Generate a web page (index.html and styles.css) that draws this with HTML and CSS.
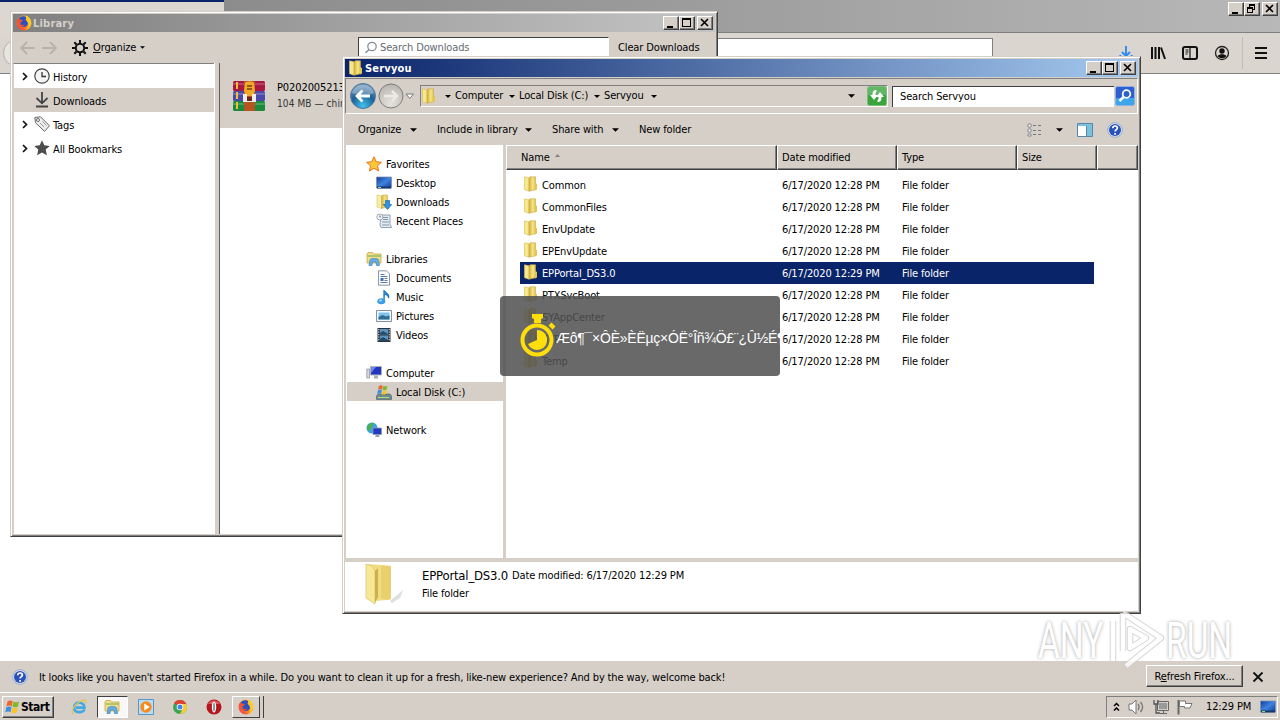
FILE: index.html
```
<!DOCTYPE html>
<html lang="en">
<head>
    <meta charset="UTF-8">
    <meta name="viewport" content="width=device-width, initial-scale=1.0">
    <title>Desktop</title>
    <link rel="stylesheet" href="styles.css">
</head>
<body>
    <!-- Icon sprites -->
    <svg class="sprites" width="0" height="0">
        <defs>
            <linearGradient id="g-gold" x1="0" x2="1"><stop offset="0" stop-color="#cfae3d"/><stop offset=".3" stop-color="#e6cb5e"/><stop offset=".6" stop-color="#f6e68c"/><stop offset="1" stop-color="#dcbf4c"/></linearGradient>
            <linearGradient id="g-blue" x1="0" x2="1" y1="0" y2="1"><stop offset="0" stop-color="#123a9a"/><stop offset=".5" stop-color="#3f83dc"/><stop offset="1" stop-color="#123a9a"/></linearGradient>
            <radialGradient id="g-back" cx=".5" cy=".9" r=".8"><stop offset="0" stop-color="#3fc3ee"/><stop offset=".6" stop-color="#1c5f96"/><stop offset="1" stop-color="#6a94b8"/></radialGradient>
            <radialGradient id="g-fwd" cx=".5" cy=".8" r=".8"><stop offset="0" stop-color="#e6e3de"/><stop offset="1" stop-color="#b9b6b1"/></radialGradient>
            <linearGradient id="g-fox" x1="1" x2="0" y1="0" y2="1"><stop offset="0" stop-color="#ffe53b"/><stop offset=".5" stop-color="#ff9416"/><stop offset="1" stop-color="#f0245a"/></linearGradient>
        </defs>
        <symbol id="folder" viewBox="0 0 16 16">
            <path d="M1.500 .8l4.500 1v13.400l-4.500-1.500z" fill="#f7e78e" stroke="#d8be5a" stroke-width=".6"/>
            <path d="M6 2.500l1-1.700h5.500v13l-6.500 1.400z" fill="url(#g-gold)" stroke="#ccab45" stroke-width=".6"/>
            <path d="M12 7l2 1v5.500L12 14.500z" fill="#e3c553"/>
        </symbol>
        <symbol id="firefox" viewBox="0 0 16 16">
            <circle cx="8" cy="8" r="7.500" fill="url(#g-fox)"/>
            <path d="M3 3.500C4.500 1 8.500.5 10.500 2.500l-1 2 2.500 3.500c0 2.500-2 4-4.300 4C5 12 4 10 4.500 8z" fill="#2b4fc4"/>
            <path d="M.8 5.500L2.500 3l1.200 1.600 3 .3-.6 1.600-2 .9C4 9.500 6 10.800 8.800 9.600 8.500 12 3.500 12.500 2 9z" fill="#f3532b"/>
            <path d="M10 .8c3.500 1.200 5.500 4.500 5 8-.4 3.500-3 5.800-5 6.200 3-2.500 3.500-7 .5-10z" fill="#ffcb25"/>
        </symbol>
        <symbol id="help" viewBox="0 0 16 16">
            <circle cx="8" cy="8" r="7.300" fill="#dbe5f5" stroke="#8aa0c4" stroke-width=".8"/>
            <circle cx="8" cy="8" r="6" fill="#2a50ba"/>
            <path d="M5.800 6.200c0-3 4.600-2.800 4.600-.3 0 1.600-2.300 1.800-2.300 3.600M8.100 11v1.700" fill="none" stroke="#fff" stroke-width="1.700"/>
        </symbol>
        <symbol id="library" viewBox="0 0 16 16">
            <path d="M1 3l1-1.500h4.500l1 1.500H15v9H1z" fill="#f2df83" stroke="#c9a73c" stroke-width=".8"/>
            <path d="M1.500 5H15" stroke="#7fb56d" stroke-width="1.200"/>
            <path d="M4 9c0-2 8.500-2 8.500 0l1 5.500h-3L10 11H6.500L6 14.500H3z" fill="#63aee6" stroke="#3d82c2" stroke-width=".7"/>
        </symbol>
        <symbol id="star" viewBox="0 0 16 16">
            <path d="M8 .8l2.200 4.900 5.200.6-3.900 3.500 1.100 5.200L8 12.300 3.400 15l1.100-5.200L.6 6.300l5.200-.6z" fill="#ffc63c" stroke="#e0741a" stroke-width="1"/>
        </symbol>
        <symbol id="screen" viewBox="0 0 16 16">
            <path d="M.5 2h15v11H.5z" fill="url(#g-blue)" stroke="#7b92b4" stroke-width=".8"/>
            <path d="M1 11.500h14v2H1z" fill="#17386f"/><path d="M2 12.500h3" stroke="#9fd16b"/>
        </symbol>
        <symbol id="downloads" viewBox="0 0 16 16">
            <path d="M1 1l4.500 1v12.500L1 13z" fill="#f8eda4" stroke="#d8c36a" stroke-width=".6"/>
            <path d="M5.500 2l1-1h5v12l-6 1.500z" fill="url(#g-gold)" stroke="#ccb150" stroke-width=".6"/>
            <path d="M9.500 6.500h4v4h2.200L11.500 15.500 7.300 10.500h2.200z" fill="#2f93dd" stroke="#1d63a8" stroke-width=".7"/>
        </symbol>
        <symbol id="recent" viewBox="0 0 16 16">
            <path d="M5 2h9v9l1.500 3.500H5L4 12z" fill="#e4ebf1" stroke="#8798a8" stroke-width=".9"/>
            <path d="M7 4.500h5M7 6.500h5M6 9h7M6 12h7" stroke="#8296aa"/>
            <circle cx="3.800" cy="4" r="3" fill="#f3f6f8" stroke="#93a3b2" stroke-width=".9"/><path d="M3.800 2.500V4H5" fill="none" stroke="#56697c" stroke-width=".8"/>
        </symbol>
        <symbol id="document" viewBox="0 0 16 16">
            <path d="M2.500.8h8l3 3v11.400h-11z" fill="#fdfdfd" stroke="#7a8da3" stroke-width=".9"/>
            <path d="M4.500 4.500h4M4.500 6.500h7M4.500 12.500h7M8.500 8.500h3M8.500 10.500h3" stroke="#5c7b9e"/><path d="M4.500 8h3v3h-3z" fill="#3c6fb5"/>
        </symbol>
        <symbol id="music" viewBox="0 0 16 16">
            <path d="M8 12V1c.5 3 6 3.500 4.500 8 0-2.500-2-3.500-3.500-3.700" fill="#3f9fe6" stroke="#2277c5" stroke-width="1.300"/>
            <ellipse cx="5.300" cy="12.300" rx="4" ry="3" fill="#3b9be4"/><ellipse cx="4.500" cy="11.500" rx="1.500" ry=".9" fill="#b6defa"/>
        </symbol>
        <symbol id="picture" viewBox="0 0 16 16">
            <path d="M.5 2.500h15v11H.5z" fill="#f8fafb" stroke="#7f93a6"/><path d="M2.500 4.500h11v7h-11z" fill="#7ec4ea"/>
            <path d="M2.500 9l4-2 3.500 1.500 3.500-1v4h-11z" fill="#2f6c8e"/>
        </symbol>
        <symbol id="video" viewBox="0 0 16 16">
            <path d="M1.500 1h13v14h-13z" fill="#27323e"/><path d="M4 2h8v5.500H4zM4 8.500h8V14H4z" fill="#5c95bf"/>
            <path d="M2.800 2v12M13.200 2v12" stroke="#f2f2f2" stroke-dasharray="1.300 1.200"/><path d="M4 6l3-2 5 3v.5H4zM4 12l3-2 5 3v1H4z" fill="#234b66"/>
        </symbol>
        <symbol id="computer" viewBox="0 0 16 16">
            <path d="M.8 4h2.700v9H.8z" fill="#d7dbe0" stroke="#8b939d" stroke-width=".8"/>
            <path d="M4.500 1.500h11v8.500h-11z" fill="#2436c0" stroke="#aab2bf"/><path d="M5 2h5L5 8z" fill="#6f86e8"/><path d="M8.500 10.500h3l1 3h-5z" fill="#a5adb8"/>
        </symbol>
        <symbol id="flag-win" viewBox="0 0 16 16">
            <path d="M2.500 2.500C4.500 1.200 6 1.300 7.700 2.200L6.700 7.200C5 6.300 3.500 6.300 1.500 7.400z" fill="#f0642d"/>
            <path d="M8.500 2.600c1.800.9 3.500.9 5.500-.2l-1 5c-2 1.100-3.800 1.100-5.500.2z" fill="#7fb92e"/>
            <path d="M1.300 8.300C3.300 7.200 5 7.200 6.500 8.100l-1 5C4 12.200 2.300 12.200.3 13.300z" fill="#3f8fe0"/>
            <path d="M7.300 8.500c1.800.9 3.500.9 5.500-.2l-1 5c-2 1.100-3.800 1.100-5.500.2z" fill="#fbc526"/>
        </symbol>
        <symbol id="disk" viewBox="0 0 16 16">
            <path d="M2 10h12l1.500 2v3.500H.5V12z" fill="#71888f" stroke="#51686f" stroke-width=".7"/><path d="M2 13.500h11" stroke="#a9e27a"/>
            <svg x="1" y="0" width="12" height="12"><use href="#flag-win"/></svg>
        </symbol>
        <symbol id="network" viewBox="0 0 16 16">
            <circle cx="6" cy="6" r="5.500" fill="#3fa3d8"/><path d="M2 3.500C4 .5 7 .5 8 1c0 2-3 2-2.500 4S3 8 2 9C.5 7 .8 5 2 3.500z" fill="#4db04b"/>
            <path d="M7 6h8.500v6.500H7z" fill="#2339c4" stroke="#8d98b0" stroke-width=".8"/><path d="M10 13h3l.7 2H9z" fill="#98a1b0"/>
        </symbol>
        <symbol id="ie" viewBox="0 0 16 16">
            <path d="M13.500 10.500C12 13.800 3.200 15 3.200 8.500c0-6.500 10.300-6.300 10.300.2H5" fill="none" stroke="#41a9e4" stroke-width="2.700"/>
            <path d="M2 15C-1 12 5 3 12 1.300c3-.6 3.500 1 2.500 3" fill="none" stroke="#e5c443" stroke-width="1.200"/>
        </symbol>
        <symbol id="wmp" viewBox="0 0 16 16">
            <path d="M.5.5h15v15H.5z" fill="#b9dcf4" stroke="#5796c8"/><circle cx="8" cy="8" r="5.700" fill="#f68a1c"/><path d="M6.200 4.500v7l5.500-3.500z" fill="#fff"/>
        </symbol>
        <symbol id="chrome" viewBox="0 0 16 16">
            <circle cx="8" cy="8" r="7" fill="#38a456"/><path d="M8 8L2 4.300A7 7 0 0 1 14.200 5H8z" fill="#e2402f"/><path d="M8 8V5h6.300A7 7 0 0 1 8 15l2.500-5z" fill="#fbcd30"/>
            <circle cx="8" cy="8" r="3.300" fill="#fff"/><circle cx="8" cy="8" r="2.500" fill="#4284ee"/>
        </symbol>
        <symbol id="opera" viewBox="0 0 16 16">
            <circle cx="8" cy="8" r="7.500" fill="#b5161b"/><path d="M2 5a7 7 0 0 1 12 0z" fill="#dd5a58"/><ellipse cx="8" cy="8" rx="2.200" ry="5.500" fill="#fff"/><ellipse cx="8" cy="8" rx="1" ry="4.500" fill="#8d9295"/>
        </symbol>
        <symbol id="min" viewBox="0 0 14 12"><path d="M3 9h6v2H3z"/></symbol>
        <symbol id="max" viewBox="0 0 14 12"><path d="M2 1h9v9H2zM3 3v6h7V3z" fill-rule="evenodd"/></symbol>
        <symbol id="restore" viewBox="0 0 14 12"><path d="M4 1h6v6H8V6h1V3H5v1H4zM2 4h6v6H2zM3 6v3h4V6z" fill-rule="evenodd"/></symbol>
        <symbol id="close" viewBox="0 0 14 12"><path d="M3 2l7 7M10 2L3 9" fill="none" stroke="#000" stroke-width="1.600"/></symbol>
        <symbol id="down" viewBox="0 0 8 4"><path d="M0 0h8L4 4z"/></symbol>
        <symbol id="chevron" viewBox="0 0 6 9"><path d="M1 1l3.500 3.500L1 8" fill="none" stroke="#111" stroke-width="1.700"/></symbol>
    </svg>

    <!-- Firefox browser behind everything -->
    <div class="browser">
        <div class="tab-strip">
            <div class="browser-tab"></div>
            <div class="caption-buttons">
                <span class="caption"><svg><use href="#min"/></svg></span>
                <span class="caption"><svg><use href="#restore"/></svg></span>
                <span class="caption spaced"><svg><use href="#close"/></svg></span>
            </div>
        </div>
        <div class="nav-bar">
            <div class="back-circle"></div>
            <div class="url-bar"></div>
            <div class="nav-icons">
                <svg width="14" height="16" viewBox="0 0 14 16"><path d="M7 1v10M3 7l4 4 4-4" fill="none" stroke="#2f8cf0" stroke-width="2"/><path d="M1 10c1 4 11 4 12 0" fill="none" stroke="#2f8cf0" stroke-width="2"/></svg>
                <svg width="16" height="16" viewBox="0 0 16 16"><path d="M2 2v12M5.500 2v12M9 2v12M11 2.500l4 11.500" fill="none" stroke="#111" stroke-width="2"/></svg>
                <svg width="16" height="16" viewBox="0 0 16 16"><rect x="1" y="2" width="14" height="12" rx="2" fill="none" stroke="#111" stroke-width="2"/><path d="M8 2v12M3.500 5h3M3.500 7h3M3.500 9h2" stroke="#111" stroke-width="1.200"/></svg>
                <svg width="16" height="16" viewBox="0 0 16 16"><circle cx="8" cy="8" r="6.500" fill="none" stroke="#222" stroke-width="1.300"/><circle cx="8" cy="6" r="2.700" fill="#111"/><path d="M3.500 11c2-2.500 7-2.500 9 0-2 3-7 3-9 0z" fill="#111"/></svg>
                <span class="nav-divider"></span>
                <svg width="14" height="14" viewBox="0 0 14 14"><path d="M1 2h12M1 7h12M1 12h12" stroke="#111" stroke-width="2"/></svg>
            </div>
        </div>
        <div class="page"></div>
        <div class="notification">
            <svg class="icon16"><use href="#help"/></svg>
            <span class="notification-text">It looks like you haven't started Firefox in a while. Do you want to clean it up for a fresh, like-new experience? And by the way, welcome back!</span>
            <span class="refresh-button">R<u>e</u>fresh Firefox...</span>
            <svg class="dismiss" viewBox="0 0 12 12"><path d="M1.500 1.500l9 9M10.500 1.500l-9 9" stroke="#111" stroke-width="1.800"/></svg>
        </div>
    </div>

    <!-- Downloads library window -->
    <div class="window library-window">
        <div class="title-bar inactive">
            <svg class="icon16"><use href="#firefox"/></svg>
            <span class="window-title">Library</span>
            <div class="caption-buttons">
                <span class="caption"><svg><use href="#min"/></svg></span>
                <span class="caption"><svg><use href="#max"/></svg></span>
                <span class="caption spaced"><svg><use href="#close"/></svg></span>
            </div>
        </div>
        <div class="library-toolbar">
            <svg class="arrows" viewBox="0 0 40 16"><path d="M16 8H2M8 2L2 8l6 6M23 8h14M31 2l6 6-6 6" fill="none" stroke="#b7b2aa" stroke-width="1.800"/></svg>
            <svg class="icon16 gear" viewBox="0 0 16 16"><circle cx="8" cy="8" r="4.200" fill="none" stroke="#111" stroke-width="2"/><path d="M8 0v3M8 13v3M0 8h3M13 8h3M2.300 2.300l2.200 2.200M11.500 11.500l2.200 2.200M2.300 13.700l2.200-2.200M11.500 4.500l2.200-2.200" stroke="#111" stroke-width="2"/></svg>
            <span class="library-organize"><u>O</u>rganize</span>
            <svg class="tiny-arrow"><use href="#down"/></svg>
            <div class="library-search">
                <svg width="14" height="14" viewBox="0 0 14 14"><circle cx="8" cy="5.500" r="4.200" fill="none" stroke="#888d99" stroke-width="1.300"/><path d="M5 8.500L1.500 12" stroke="#888d99" stroke-width="1.500"/></svg>
                <span>Search Downloads</span>
            </div>
            <span class="clear-downloads">Clear Downloads</span>
        </div>
        <div class="library-body">
            <div class="library-tree">
                <div class="tree-item">
                    <svg class="twisty"><use href="#chevron"/></svg>
                    <svg class="icon16" viewBox="0 0 16 16"><circle cx="8" cy="8" r="7.200" fill="#f4f4f4" stroke="#444" stroke-width="1.200"/><path d="M8 4v4.500h4" fill="none" stroke="#333" stroke-width="1.300"/></svg>
                    <span class="tree-label">History</span>
                </div>
                <div class="tree-item selected">
                    <span class="twisty"></span>
                    <svg class="icon16" viewBox="0 0 16 16"><path d="M8 0v11M2.500 6L8 11.300 13.500 6M2 14.500h12" fill="none" stroke="#444" stroke-width="1.800"/></svg>
                    <span class="tree-label">Downloads</span>
                </div>
                <div class="tree-item">
                    <svg class="twisty"><use href="#chevron"/></svg>
                    <svg class="icon16" viewBox="0 0 16 16"><path d="M.8 1.500L6.500.8l9 9-5 5.500-9-8.500z" fill="#eee" stroke="#666"/><circle cx="4" cy="4" r="1.500" fill="#fff" stroke="#666"/><path d="M6 7l4 4M8.500 5.500l4 4" stroke="#999"/></svg>
                    <span class="tree-label">Tags</span>
                </div>
                <div class="tree-item">
                    <svg class="twisty"><use href="#chevron"/></svg>
                    <svg class="icon16" viewBox="0 0 16 16"><path d="M8 .3l2.300 5 5.500.6-4.100 3.700 1.200 5.600L8 12.400l-4.900 2.800 1.200-5.600L.2 5.900l5.500-.6z" fill="#4c4c4c"/></svg>
                    <span class="tree-label">All Bookmarks</span>
                </div>
            </div>
            <div class="library-splitter"></div>
            <div class="library-list">
                <div class="download-item">
                    <svg width="32" height="32" viewBox="0 0 32 32">
                        <rect y="1" width="32" height="10" rx="1.500" fill="#a81840"/><rect y="11" width="32" height="10" rx="1.500" fill="#4a4aa8"/><rect y="21" width="32" height="10" rx="1.500" fill="#1c8a3c"/>
                        <path d="M0 4h32M0 14h32M0 24h32" stroke="#fff" stroke-opacity=".25" stroke-width="1.500"/>
                        <path d="M4 2v7M4 12v7M4 22v7" stroke="#f0bf35" stroke-width="2"/>
                        <path d="M11 1h11v30H11z" fill="#b5541f"/><path d="M12 3c1-2 8-2 9 0l1 8-2 5h-7l-2-5z" fill="#f0a92b"/><path d="M14 6h5M14 9h5" stroke="#7a3d10" stroke-width="1.500"/>
                        <path d="M10 14h4v3h5v-3h4v8H10z" fill="#eee"/><path d="M14 17h5v4h-5z" fill="#70221d"/>
                    </svg>
                    <div class="download-info">
                        <div class="download-name">P0202005213</div>
                        <div class="download-meta">104 MB — chin</div>
                    </div>
                </div>
            </div>
        </div>
    </div>

    <!-- Explorer window -->
    <div class="window explorer-window">
        <div class="title-bar active">
            <svg class="icon16"><use href="#folder"/></svg>
            <span class="window-title">Servyou</span>
            <div class="caption-buttons">
                <span class="caption"><svg><use href="#min"/></svg></span>
                <span class="caption"><svg><use href="#max"/></svg></span>
                <span class="caption spaced"><svg><use href="#close"/></svg></span>
            </div>
        </div>
        <div class="address-row">
            <svg class="travel" width="68" height="28" viewBox="0 0 68 28">
                <circle cx="15" cy="14" r="12.500" fill="url(#g-back)" stroke="#56789a"/><path d="M4 11a11.500 11.500 0 0 1 22 0c-7 3-15 3-22 0z" fill="#fff" fill-opacity=".3"/>
                <path d="M22 14H9M14.500 8.500L9 14l5.500 5.500" fill="none" stroke="#fff" stroke-width="2.800"/>
                <circle cx="43" cy="14" r="12" fill="url(#g-fwd)" stroke="#7d7d7d"/><path d="M36 14h13M44 9l5 5-5 5" fill="none" stroke="#eceae6" stroke-width="2.500"/>
                <path d="M58 12h7.500l-3.700 4.500z" fill="#fff" stroke="#777"/>
            </svg>
            <div class="address-bar">
                <svg class="icon16"><use href="#folder"/></svg>
                <svg class="crumb-arrow first"><use href="#down"/></svg>
                <span class="crumb crumb-computer">Computer</span>
                <svg class="crumb-arrow"><use href="#down"/></svg>
                <span class="crumb crumb-disk">Local Disk (C:)</span>
                <svg class="crumb-arrow"><use href="#down"/></svg>
                <span class="crumb crumb-folder">Servyou</span>
                <svg class="crumb-arrow"><use href="#down"/></svg>
                <svg class="address-drop"><use href="#down"/></svg>
                <svg class="go" width="20" height="20" viewBox="0 0 20 20"><rect x=".5" y=".5" width="19" height="19" rx="2" fill="#3aa53d" stroke="#7fbd7a"/><path d="M1 1h18v8H1z" fill="#fff" fill-opacity=".2"/><path d="M9.500 4C6 4 5.500 6 5.500 9H3l4 5 4-5H8.500c0-2 0-2.500 1-3zM10.500 16c3.500 0 4-2 4-5H17l-4-5-4 5h2.500c0 2 0 2.500-1 3z" fill="#fff"/></svg>
            </div>
            <div class="search-box">Search Servyou</div>
            <svg class="search-go" width="20" height="20" viewBox="0 0 20 20"><rect x=".5" y=".5" width="19" height="19" rx="2" fill="#2c5fd0" stroke="#8fb1e8"/><path d="M1 12h18v7H1z" fill="#45c4f2" fill-opacity=".7"/><circle cx="11.500" cy="8" r="3.800" fill="none" stroke="#fff" stroke-width="1.800"/><path d="M8.500 11L4.500 15" stroke="#fff" stroke-width="2.500"/></svg>
        </div>
        <div class="command-bar">
            <span class="command cmd-organize">Organize <svg><use href="#down"/></svg></span>
            <span class="command cmd-include">Include in library <svg><use href="#down"/></svg></span>
            <span class="command cmd-share">Share with <svg><use href="#down"/></svg></span>
            <span class="command">New folder</span>
            <div class="view-tools">
                <svg width="16" height="14" viewBox="0 0 16 14"><path d="M2 1h3v3H2zM2 6h3v3H2zM2 11h3v2H2z" fill="#fff" stroke="#868a91"/><path d="M7 2.500h3M12 2.500h3M7 7.500h3M12 7.500h3M7 11.500h3M12 11.500h3" stroke="#777"/></svg>
                <svg class="view-arrow"><use href="#down"/></svg>
                <svg width="16" height="14" viewBox="0 0 16 14"><path d="M.5.5h15v13H.5z" fill="#fff" stroke="#5887a8"/><path d="M1 1h14v2H1zM10 3h5v10h-5z" fill="#7cc0e0"/><path d="M9.500 3v10" stroke="#5887a8"/></svg>
                <svg class="icon16"><use href="#help"/></svg>
            </div>
        </div>
        <div class="explorer-body">
            <div class="nav-pane">
                <div class="nav-item root"><svg class="icon16"><use href="#star"/></svg><span>Favorites</span></div>
                <div class="nav-item"><svg class="icon16"><use href="#screen"/></svg><span>Desktop</span></div>
                <div class="nav-item"><svg class="icon16"><use href="#downloads"/></svg><span>Downloads</span></div>
                <div class="nav-item"><svg class="icon16"><use href="#recent"/></svg><span>Recent Places</span></div>
                <div class="nav-item root group"><svg class="icon16"><use href="#library"/></svg><span>Libraries</span></div>
                <div class="nav-item"><svg class="icon16"><use href="#document"/></svg><span>Documents</span></div>
                <div class="nav-item"><svg class="icon16"><use href="#music"/></svg><span>Music</span></div>
                <div class="nav-item"><svg class="icon16"><use href="#picture"/></svg><span>Pictures</span></div>
                <div class="nav-item"><svg class="icon16"><use href="#video"/></svg><span>Videos</span></div>
                <div class="nav-item root group"><svg class="icon16"><use href="#computer"/></svg><span>Computer</span></div>
                <div class="nav-item selected"><svg class="icon16"><use href="#disk"/></svg><span>Local Disk (C:)</span></div>
                <div class="nav-item root group"><svg class="icon16"><use href="#network"/></svg><span>Network</span></div>
            </div>
            <div class="file-pane">
                <div class="columns file-header">
                    <span class="name-header">Name <svg width="5" height="3" viewBox="0 0 5 3"><path d="M0 3h5L2.500 0z" fill="#808080"/></svg></span>
                    <span>Date modified</span><span>Type</span><span>Size</span><span></span>
                </div>
                <div class="file-list">
                    <div class="columns file-row"><span class="file-name"><svg class="icon16"><use href="#folder"/></svg>Common</span><span>6/17/2020 12:28 PM</span><span>File folder</span></div>
                    <div class="columns file-row"><span class="file-name"><svg class="icon16"><use href="#folder"/></svg>CommonFiles</span><span>6/17/2020 12:28 PM</span><span>File folder</span></div>
                    <div class="columns file-row"><span class="file-name"><svg class="icon16"><use href="#folder"/></svg>EnvUpdate</span><span>6/17/2020 12:28 PM</span><span>File folder</span></div>
                    <div class="columns file-row"><span class="file-name"><svg class="icon16"><use href="#folder"/></svg>EPEnvUpdate</span><span>6/17/2020 12:28 PM</span><span>File folder</span></div>
                    <div class="columns file-row selected"><span class="file-name"><svg class="icon16"><use href="#folder"/></svg>EPPortal_DS3.0</span><span>6/17/2020 12:29 PM</span><span>File folder</span></div>
                    <div class="columns file-row"><span class="file-name"><svg class="icon16"><use href="#folder"/></svg>PTXSvcBoot</span><span>6/17/2020 12:28 PM</span><span>File folder</span></div>
                    <div class="columns file-row"><span class="file-name"><svg class="icon16"><use href="#folder"/></svg>SYAppCenter</span><span>6/17/2020 12:28 PM</span><span>File folder</span></div>
                    <div class="columns file-row"><span class="file-name"><svg class="icon16"><use href="#folder"/></svg>SYPF</span><span>6/17/2020 12:28 PM</span><span>File folder</span></div>
                    <div class="columns file-row"><span class="file-name"><svg class="icon16"><use href="#folder"/></svg>Temp</span><span>6/17/2020 12:28 PM</span><span>File folder</span></div>
                </div>
            </div>
        </div>
        <div class="details-pane">
            <svg class="big-folder" width="44" height="44" viewBox="0 0 44 44">
                <path d="M27 38l13-11-3 8-8 5z" fill="#c9c9cc" opacity=".6"/>
                <path d="M3 1l17 1 8 1v33l-4 1-12 1z" fill="#efdd86"/><path d="M18 3h10v33l-4 1-6-2z" fill="#e9d06c"/>
                <path d="M3 1l6 2 3 5v33L3 35z" fill="#f8e795" stroke="#dcc263" stroke-width=".7"/><path d="M12 8l3-3v29l-3 6z" fill="#cdb04b"/>
            </svg>
            <div>
                <div class="details-line"><span class="details-name">EPPortal_DS3.0</span><span class="details-date">Date modified: 6/17/2020 12:29 PM</span></div>
                <div class="details-line">File folder</div>
            </div>
        </div>
    </div>

    <!-- Launch splash -->
    <div class="splash">
        <svg width="36" height="44" viewBox="0 0 36 44">
            <circle cx="17" cy="27" r="14.500" fill="none" stroke="#ffdf0a" stroke-width="4"/>
            <path d="M12 1h11v4l-2 1v4h-7V6l-2-1z" fill="#ffdf0a"/><path d="M28.500 12.500l3-3 4 4-3 3z" fill="#ffdf0a"/>
            <path d="M17 17a10 10 0 1 1-9 14l9-4z" fill="#ffdf0a"/>
        </svg>
        <span>Æô¶¯×ÔÈ»ÈËµç×ÓË°Îñ¾Ö£¨¿Û½É¶</span>
    </div>

    <!-- Taskbar -->
    <div class="taskbar">
        <div class="start-button"><svg class="icon16"><use href="#flag-win"/></svg>Start</div>
        <div class="task"><svg class="icon16"><use href="#ie"/></svg></div>
        <div class="task pressed"><svg class="icon16"><use href="#library"/></svg></div>
        <div class="task"><svg class="icon16"><use href="#wmp"/></svg></div>
        <div class="task"><svg class="icon16"><use href="#chrome"/></svg></div>
        <div class="task"><svg class="icon16"><use href="#opera"/></svg></div>
        <div class="task raised"><svg class="icon16"><use href="#firefox"/></svg></div>
        <div class="task-stack"></div>
        <div class="tray">
            <svg width="7" height="10" viewBox="0 0 7 10"><path d="M1 4l2.500-2.500L6 4M1 8.500L3.500 6 6 8.500" fill="none" stroke="#000" stroke-width="1.500"/></svg>
            <svg width="17" height="16" viewBox="0 0 17 16"><path d="M1 5h3l4-4v14l-4-4H1z" fill="#fff" stroke="#777"/><path d="M10 5c1.500 2 1.500 4 0 6M12.500 3c2.500 3 2.500 7 0 10" fill="none" stroke="#777" stroke-width="1.300"/></svg>
            <svg width="16" height="16" viewBox="0 0 16 16"><path d="M5 3h10v8H5z" fill="#999" stroke="#fff"/><path d="M4.500 2.500h11v9h-11zM7 14.500h7M10.500 12v2" fill="none" stroke="#666"/><path d="M1 1v4h4V1M3 5v9h4" fill="none" stroke="#555" stroke-width="1.300"/></svg>
            <svg width="16" height="16" viewBox="0 0 16 16"><path d="M1.500 1v14.500" stroke="#666" stroke-width="2"/><path d="M2.500 2h6v2.500h6.500l-2 4.500H7.500V7.500h-5z" fill="#fff" stroke="#777"/></svg>
            <span class="clock">12:29 PM</span>
            <svg class="icon16"><use href="#screen"/></svg>
        </div>
    </div>

    <!-- Watermark -->
    <div class="watermark">
        <span class="watermark-word">ANY</span>
        <svg width="60" height="64" viewBox="0 0 60 64"><path d="M17 4v38M7 12v40M17 4l38 25L20 57M24 20l16 9-16 10z" fill="none" stroke="#ccc" stroke-width="6.500" stroke-linejoin="round"/><path d="M17 4v38M7 12v40M17 4l38 25L20 57M24 20l16 9-16 10z" fill="none" stroke="#fff" stroke-width="4.500" stroke-linejoin="round"/></svg>
        <span class="watermark-word">RUN</span>
    </div>
</body>
</html>
```
FILE: styles.css
```
* {
    box-sizing: border-box;
}

body {
    margin: 0;
    width: 1280px;
    height: 720px;
    overflow: hidden;
    position: relative;
    background: #d5cfc8;
    font-family: "DejaVu Sans Condensed", "DejaVu Sans", sans-serif;
    font-stretch: condensed;
    font-size: 11px;
    letter-spacing: -0.13px;
    line-height: 14px;
    color: #000;
    white-space: nowrap;
}

svg {
    flex-shrink: 0;
    display: block;
}

.sprites {
    position: absolute;
}

.icon16 {
    width: 16px;
    height: 16px;
}

/* Caption buttons */
.caption-buttons {
    display: flex;
    margin-left: auto;
}

.caption {
    width: 16px;
    height: 14px;
    background: #d5cfc8;
    border: 1px solid;
    border-color: #fff #404040 #404040 #fff;
    box-shadow: inset -1px -1px #808080;
}

.caption svg {
    width: 14px;
    height: 12px;
}

.caption.spaced {
    margin-left: 2px;
}

/* Browser */
.browser {
    height: 692px;
    display: flex;
    flex-direction: column;
}

.tab-strip {
    display: flex;
    height: 33px;
    padding: 2px 2px 0 0;
    background: linear-gradient(90deg, #858585, #9a9a9a 50%, #b8b8b8);
    border-bottom: 1px solid #808080;
}

.browser-tab {
    width: 224px;
    height: 33px;
    margin-top: -2px;
    background: #dcd8d1;
    border-top: 2px solid #0a246a;
}

.nav-bar {
    display: flex;
    align-items: center;
    height: 41px;
    background: #dad6cf;
    border-bottom: 1px solid #808080;
}

.back-circle {
    width: 28px;
    height: 28px;
    margin-left: 3px;
    border: 1px solid #b5b1aa;
    border-radius: 50%;
    background: #e8e5df;
}

.url-bar {
    width: 860px;
    height: 28px;
    margin-left: 102px;
    margin-top: -3px;
    background: #fff;
    border: 1px solid #808080;
}

.nav-icons {
    display: flex;
    align-items: center;
    margin-left: auto;
    padding-right: 12px;
    gap: 16px;
}

.nav-icons svg:first-child {
    margin-right: 1px;
}

.nav-divider {
    width: 1px;
    height: 32px;
    margin-left: -4px;
    margin-right: -5px;
    background: #c2beb7;
}

.page {
    flex: 1;
    background: #fff;
}

.notification {
    display: flex;
    align-items: center;
    height: 31px;
    padding: 0 16px 0 12px;
    background: #d5cfc8;
}

.notification-text {
    margin-left: 11px;
    padding-top: 2px;
}

.refresh-button {
    width: 97px;
    height: 22px;
    margin-left: auto;
    margin-top: -2px;
    line-height: 22px;
    text-align: center;
    border: 1px solid;
    border-color: #fff #404040 #404040 #fff;
    box-shadow: inset -1px -1px #808080;
}

.dismiss {
    width: 12px;
    height: 12px;
    margin-left: 9px;
}

/* Windows */
.window {
    position: absolute;
    display: flex;
    flex-direction: column;
    padding: 2px;
    background: #d5cfc8;
    border: 1px solid;
    border-color: #d5cfc8 #404040 #404040 #d5cfc8;
    box-shadow: inset 1px 1px #fff, inset -1px -1px #808080;
}

.title-bar {
    display: flex;
    align-items: center;
    height: 18px;
    padding: 0 2px 0 3px;
    font-weight: bold;
    letter-spacing: 0.2px;
    flex-shrink: 0;
}

.title-bar.inactive {
    background: linear-gradient(90deg, #808080, #c4c4c4);
    color: #d5cfc8;
}

.title-bar.active {
    background: linear-gradient(90deg, #0a246a, #a6caf0);
    color: #fff;
}

.window-title {
    margin-left: 1px;
    padding-top: 1px;
}

/* Library window */
.library-window {
    left: 10px;
    top: 11px;
    width: 708px;
    height: 526px;
}

.library-toolbar {
    display: flex;
    align-items: center;
    height: 31px;
    flex-shrink: 0;
}

.arrows {
    width: 40px;
    height: 16px;
    margin-left: 6px;
}

.gear {
    margin-left: 13px;
}

.library-organize {
    width: 44px;
    margin-left: 5px;
}

.tiny-arrow {
    width: 5px;
    height: 3px;
    margin-left: 3px;
}

.library-search {
    display: flex;
    align-items: center;
    gap: 2px;
    width: 251px;
    height: 22px;
    margin-left: 213px;
    padding-left: 5px;
    background: #fff;
    border: 1px solid #fff;
    border-top-color: #404040;
    border-left-color: #404040;
    color: #666a75;
}

.clear-downloads {
    margin-left: 9px;
}

.library-body {
    display: flex;
    flex: 1;
    min-height: 0;
}

.library-tree {
    width: 201px;
    background: #fff;
    border-top: 1px solid #808080;
    border-left: 1px solid #d5cfc8;
}

.tree-item {
    display: flex;
    align-items: center;
    height: 24px;
    padding-left: 8px;
}

.tree-item .icon16 {
    margin: 0 3px 0 6px;
}

.tree-item.selected {
    background: #d5cfc8;
}

.tree-label {
    padding-top: 3px;
}

.twisty {
    width: 6px;
    height: 9px;
}

.library-splitter {
    width: 5px;
    border-left: 1px solid #fff;
}

.library-list {
    flex: 1;
    background: #fff;
    border-left: 1px solid #606060;
}

.download-item {
    display: flex;
    align-items: center;
    height: 65px;
    padding-left: 13px;
    background: #d5cfc8;
}

.download-info {
    margin-left: 12px;
}

.download-name {
    margin-top: 1px;
    letter-spacing: -0.1px;
}

.download-meta {
    margin-top: 2px;
    font-size: 10px;
    letter-spacing: 0.1px;
    color: #333;
}

/* Explorer window */
.explorer-window {
    left: 342px;
    top: 56px;
    width: 799px;
    height: 558px;
}

.address-row {
    display: flex;
    align-items: center;
    height: 36px;
    margin-top: 1px;
    flex-shrink: 0;
    border: 1px solid #808080;
    border-right-color: #fff;
    border-bottom-color: #fff;
}

.travel {
    margin-left: 2px;
}

.address-bar {
    display: flex;
    align-items: center;
    width: 468px;
    height: 22px;
    margin-left: 4px;
    border: 1px solid;
    border-color: #808080 #fff #fff #808080;
}

.crumb-arrow {
    width: 6px;
    height: 3px;
    margin: 0 4px 0 6px;
}

.crumb-arrow.first {
    margin-left: 8px;
}

.crumb-computer {
    width: 48px;
}

.crumb-disk {
    width: 69px;
}

.crumb-folder {
    width: 41px;
}

.address-drop {
    width: 7px;
    height: 4px;
    margin-left: auto;
    margin-right: 12px;
}

.search-box {
    width: 222px;
    height: 21px;
    margin-left: 4px;
    padding-left: 7px;
    line-height: 20px;
    background: #fff;
    border-left: 1px solid #404040;
    border-top: 1px solid #404040;
}

.search-go {
    margin-left: 1px;
}

.command-bar {
    display: flex;
    align-items: center;
    height: 31px;
    padding-left: 13px;
    flex-shrink: 0;
}

.command {
    display: flex;
    align-items: center;
    justify-content: space-between;
}

.command svg,
.view-arrow {
    width: 7px;
    height: 4px;
}

.cmd-organize {
    width: 59px;
    margin-right: 20px;
}

.cmd-include {
    width: 95px;
    margin-right: 20px;
}

.cmd-share {
    width: 67px;
    margin-right: 20px;
}

.view-tools {
    display: flex;
    align-items: center;
    gap: 14px;
    margin-left: auto;
    padding-right: 15px;
}

.explorer-body {
    display: flex;
    flex: 1;
    min-height: 0;
}

.nav-pane {
    width: 158px;
    padding-top: 9px;
    background: #fff;
    border-left: 1px solid #d5cfc8;
}

.nav-item {
    display: flex;
    align-items: center;
    height: 19px;
    margin-left: 1px;
    padding-left: 29px;
    gap: 4px;
}

.nav-item span {
    padding-top: 2px;
}

.nav-item.root {
    padding-left: 19px;
}

.nav-item.group {
    margin-top: 19px;
}

.nav-item.selected {
    background: #d5cfc8;
}

.file-pane {
    flex: 1;
    margin-left: 3px;
    background: #fff;
}

.columns {
    display: grid;
    grid-template-columns: 271px 120px 120px 80px 1fr;
}

.file-header {
    height: 23px;
    background: #d5cfc8;
}

.file-header span {
    padding-left: 4px;
    line-height: 23px;
    border: 1px solid;
    border-color: #fff #404040 #404040 #fff;
    box-shadow: inset -1px -1px #808080;
}

.file-header .name-header {
    display: flex;
    align-items: center;
    gap: 5px;
    padding-left: 14px;
}

.name-header svg {
    margin-top: -4px;
}

.file-list {
    padding-top: 6px;
}

.file-row {
    width: 574px;
    height: 22px;
    margin-left: 14px;
    grid-template-columns: 262px 120px 120px;
    line-height: 24px;
}

.file-row.selected {
    background: #0a246a;
    color: #fff;
}

.file-name {
    display: flex;
    gap: 3px;
    padding-left: 3px;
}

.file-name svg {
    margin-top: 2px;
}

.details-pane {
    display: flex;
    height: 53px;
    border-top: 4px solid #d5cfc8;
    padding-left: 18px;
    flex-shrink: 0;
    background: #fff;
}

.big-folder {
    margin-top: 1px;
}

.details-pane > div {
    margin-left: 15px;
    padding-top: 4px;
}

.details-line {
    display: flex;
    height: 18px;
    line-height: 19px;
}

.details-name {
    width: 90px;
    font-size: 13px;
    letter-spacing: -0.2px;
}

.details-date {
    letter-spacing: -0.14px;
}

/* Splash shown while the client starts */
.splash {
    position: absolute;
    left: 500px;
    top: 296px;
    width: 280px;
    height: 80px;
    padding-left: 20px;
    display: flex;
    align-items: center;
    border-radius: 4px;
    background: rgba(80, 80, 80, 0.86);
    font-family: "Liberation Sans", Arial, sans-serif;
    font-size: 14px;
    font-stretch: normal;
    letter-spacing: -0.24px;
    color: #fff;
}

.splash svg {
    margin-top: -2px;
}

.splash span {
    margin-top: 4px;
}

/* Taskbar */
.taskbar {
    display: flex;
    align-items: center;
    height: 28px;
    padding: 1px 2px 0;
    background: #d5cfc8;
    border-top: 1px solid #fff;
}

.start-button {
    display: flex;
    align-items: center;
    width: 52px;
    height: 22px;
    padding-left: 2px;
    font-size: 12px;
    font-weight: bold;
    letter-spacing: -0.45px;
    border: 1px solid;
    border-color: #fff #404040 #404040 #fff;
    box-shadow: inset -1px -1px #808080;
    margin-right: 9px;
}

.task {
    display: flex;
    align-items: center;
    justify-content: center;
    width: 31px;
    height: 22px;
    margin-right: 2.800px;
}

.task.pressed {
    background: #faf8f6;
    border: 1px solid;
    border-color: #404040 #fff #fff #404040;
}

.task.raised {
    width: 28px;
    margin-right: 0;
    border: 1px solid;
    border-color: #fff #404040 #404040 #fff;
}

.task-stack {
    width: 4px;
    height: 22px;
    border-right: 1px solid #404040;
}

.tray {
    display: flex;
    align-items: center;
    gap: 8px;
    width: 172px;
    height: 22px;
    margin-left: auto;
    padding-left: 6px;
    border: 1px solid;
    border-color: #808080 #fff #fff #808080;
}

.clock {
    width: 46px;
    margin-left: 5px;
}

.watermark {
    position: absolute;
    left: 1038px;
    top: 609px;
    display: flex;
    align-items: center;
    opacity: 0.8;
    font-family: Roboto, "Liberation Sans", sans-serif;
    font-size: 50px;
    font-stretch: normal;
    letter-spacing: 0;
    line-height: 64px;
    color: #fff;
}

.watermark-word {
    width: 68px;
    transform: scaleX(0.67);
    transform-origin: left;
    text-shadow: 0 0 4px #888;
}
```
